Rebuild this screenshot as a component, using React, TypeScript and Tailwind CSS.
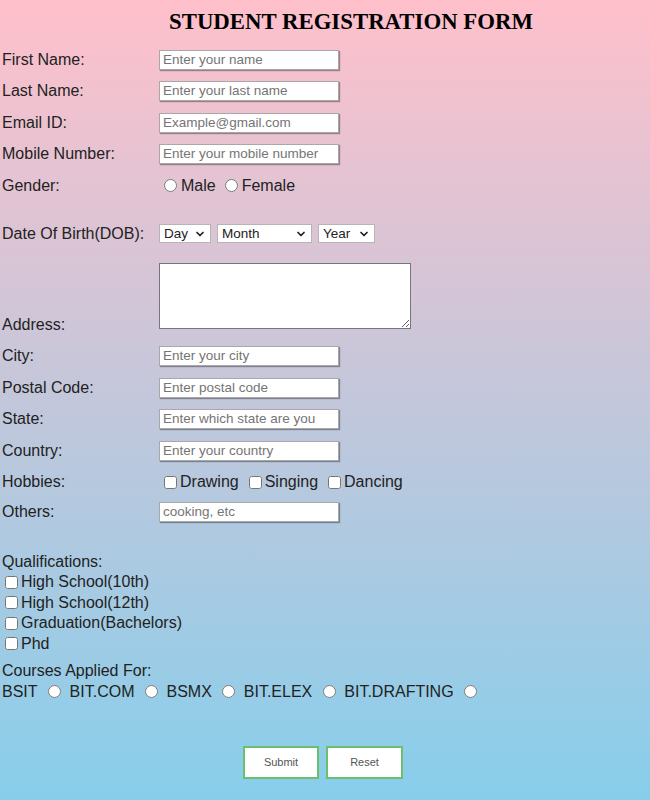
import { ChevronDown } from "lucide-react";

const sans = "font-['Liberation_Sans',Arial,sans-serif]";

const TextRow = ({ label, placeholder }: { label: string; placeholder: string }) => (
    <div className="flex items-center h-[31.5px]">
        <label className="w-[159px] pl-[2px]">{label}</label>
        <input
            type="text"
            placeholder={placeholder}
            className="w-[180px] h-[20px] px-[3px] bg-white text-[13.5px] text-[#222] placeholder:text-[#757575] border border-[#a8a8a8] shadow-[1px_1px_1px_rgba(0,0,0,0.35)] outline-none"
        />
    </div>
);

const Select = ({ label, width, options }: { label: string; width: string; options: string[] }) => (
    <div className={`relative h-[19px] ${width}`}>
        <select className="block appearance-none w-full h-[19px] pl-[4px] py-0 leading-[17px] bg-white text-[13.5px] text-[#222] border border-[#b5b5b5] outline-none">
            <option>{label}</option>
            {options.map((o) => (
                <option key={o}>{o}</option>
            ))}
        </select>
        <ChevronDown size={12} strokeWidth={3.5} className="absolute right-[5px] top-[4px] text-[#222] pointer-events-none" />
    </div>
);

const Radio = ({ name, className }: { name: string; className: string }) => (
    <input type="radio" name={name} className={`w-[13px] h-[13px] m-0 ${className}`} />
);

const Check = ({ className }: { className: string }) => (
    <input type="checkbox" className={`w-[13px] h-[13px] m-0 ${className}`} />
);

const qualifications = ["High School(10th)", "High School(12th)", "Graduation(Bachelors)", "Phd"];
const courses = ["BSIT", "BIT.COM", "BSMX", "BIT.ELEX", "BIT.DRAFTING"];
const days = Array.from({ length: 31 }, (_, i) => String(i + 1));
const months = ["January", "February", "March", "April", "May", "June", "July", "August", "September", "October", "November", "December"];
const years = Array.from({ length: 30 }, (_, i) => String(2005 - i));

export default function App() {
    return (
        <div className={`w-[650px] h-[800px] overflow-hidden bg-[linear-gradient(#ffc0cb,#87ceeb)] text-[16px] text-[#222] ${sans}`}>
            <div className="h-[44px] flex items-center justify-center pl-[52px]">
                <h1 className="font-['Liberation_Serif','Times_New_Roman',serif] font-bold text-[22.8px] text-black">
                    STUDENT REGISTRATION FORM
                </h1>
            </div>

            <form>
                <TextRow label="First Name:" placeholder="Enter your name" />
                <TextRow label="Last Name:" placeholder="Enter your last name" />
                <TextRow label="Email ID:" placeholder="Example@gmail.com" />
                <TextRow label="Mobile Number:" placeholder="Enter your mobile number" />

                <div className="flex items-center h-[31.5px]">
                    <label className="w-[159px] pl-[2px]">Gender:</label>
                    <Radio name="gender" className="ml-[5px] mr-[4px]" />
                    <span>Male</span>
                    <Radio name="gender" className="ml-[9px] mr-[4px]" />
                    <span>Female</span>
                </div>

                <div className="flex items-center h-[31.5px] mt-[16.5px]">
                    <label className="w-[159px] pl-[2px]">Date Of Birth(DOB):</label>
                    <div className="flex gap-[6px]">
                        <Select label="Day" width="w-[52px]" options={days} />
                        <Select label="Month" width="w-[95px]" options={months} />
                        <Select label="Year" width="w-[57px]" options={years} />
                    </div>
                </div>

                <div className="flex items-end mt-[13px] mb-[12px]">
                    <label className="w-[159px] pl-[2px] -mb-[8px]">Address:</label>
                    <textarea className="w-[252px] h-[66px] bg-white border border-[#767676] outline-none resize" />
                </div>

                <TextRow label="City:" placeholder="Enter your city" />
                <TextRow label="Postal Code:" placeholder="Enter postal code" />
                <TextRow label="State:" placeholder="Enter which state are you" />
                <TextRow label="Country:" placeholder="Enter your country" />

                <div className="flex items-center h-[31.5px]">
                    <label className="w-[159px] pl-[2px]">Hobbies:</label>
                    <Check className="ml-[5px] mr-[3px]" />
                    <span>Drawing</span>
                    <Check className="ml-[10px] mr-[3px]" />
                    <span>Singing</span>
                    <Check className="ml-[10px] mr-[3px]" />
                    <span>Dancing</span>
                </div>

                <div className="-mt-[1.5px]">
                    <TextRow label="Others:" placeholder="cooking, etc" />
                </div>

                <div className="mt-[23.5px] pl-[2px] leading-[20.5px]">
                    <div>Qualifications:</div>
                    {qualifications.map((q) => (
                        <div key={q} className="flex items-center">
                            <Check className="ml-[3px] mr-[3px]" />
                            <span>{q}</span>
                        </div>
                    ))}
                    <div className="mt-[7px]">Courses Applied For:</div>
                    <div className="flex items-center">
                        {courses.map((c) => (
                            <span key={c} className="flex items-center">
                                <span>{c}</span>
                                <Radio name="course" className="ml-[10.5px] mr-[8.5px]" />
                            </span>
                        ))}
                    </div>
                </div>

                <div className="flex justify-center gap-[7px] pr-[4px] mt-[44px]">
                    <button type="submit" className="w-[76px] h-[33px] bg-white border-2 border-[#6cbf6c] text-[11px] text-[#555]">
                        Submit
                    </button>
                    <button type="reset" className="w-[77px] h-[33px] bg-white border-2 border-[#6cbf6c] text-[11px] text-[#555]">
                        Reset
                    </button>
                </div>
            </form>
        </div>
    );
}
